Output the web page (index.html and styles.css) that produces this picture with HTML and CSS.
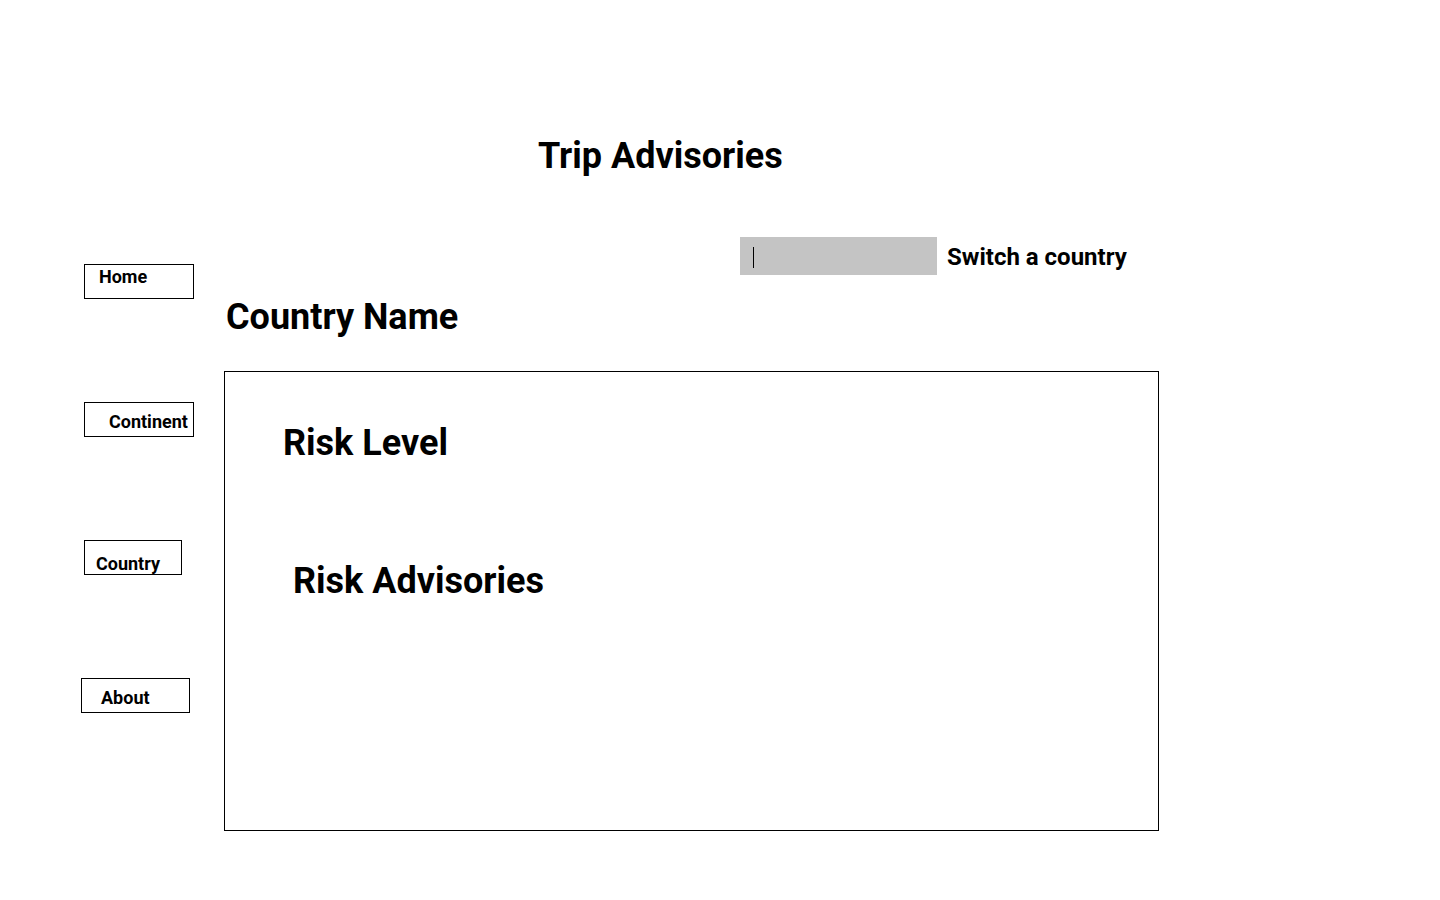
FILE: index.html
```html
<!DOCTYPE html>
<html lang="en">
<head>
<meta charset="utf-8">
<title>Trip Advisories</title>
<link rel="stylesheet" href="styles.css">
</head>
<body>
  <header class="top">
    <h1 class="title">Trip Advisories</h1>
  </header>
  <div class="layout">
    <nav class="side">
      <a class="nav-btn nav-home" href="#">Home</a>
      <a class="nav-btn nav-continent" href="#">Continent</a>
      <a class="nav-btn nav-country" href="#">Country</a>
      <a class="nav-btn nav-about" href="#">About</a>
    </nav>
    <main class="content">
      <div class="switch">
        <div class="search"><span class="caret"></span></div>
        <span class="switch-label">Switch a country</span>
      </div>
      <h2 class="country-name">Country Name</h2>
      <section class="panel">
        <h3 class="risk-level">Risk Level</h3>
        <h3 class="risk-adv">Risk Advisories</h3>
      </section>
    </main>
  </div>
</body>
</html>
```
FILE: styles.css
```css
* { box-sizing: border-box; }

html, body {
  margin: 0;
  padding: 0;
  background: #ffffff;
  color: #000000;
  font-family: Roboto, "Liberation Sans", Arial, sans-serif;
}

.top {
  padding: 135px 0 0 538px;
}

.title {
  margin: 0;
  font-size: 36px;
  line-height: 42px;
  font-weight: 700;
}

.layout {
  display: flex;
  margin-top: 60px;
}

.side {
  width: 224px;
  flex: none;
  display: flex;
  flex-direction: column;
  align-items: flex-start;
  padding-top: 27px;
}

.nav-btn {
  display: block;
  height: 35px;
  border: 1px solid #000;
  color: #000;
  text-decoration: none;
  font-size: 18px;
  line-height: 21px;
  font-weight: 700;
  margin-left: 84px;
  margin-top: 103px;
  white-space: nowrap;
}

.nav-home {
  margin-top: 0;
  width: 110px;
  padding: 1px 0 0 14px;
}

.nav-continent {
  width: 110px;
  padding: 8px 0 0 24px;
}

.nav-country {
  width: 98px;
  padding: 12px 0 0 11px;
}

.nav-about {
  margin-left: 81px;
  width: 109px;
  padding: 8px 0 0 19px;
}

.content {
  width: 935px;
  flex: none;
}

.switch {
  display: flex;
  align-items: flex-start;
  margin-left: 516px;
  height: 38px;
}

.search {
  width: 197px;
  height: 38px;
  background: #c4c4c4;
  padding: 10px 0 0 13px;
}

.caret {
  display: block;
  width: 1px;
  height: 21px;
  background: #000;
}

.switch-label {
  margin-left: 10px;
  margin-top: 6px;
  font-size: 24px;
  line-height: 28px;
  font-weight: 700;
  white-space: nowrap;
}

.country-name {
  margin: 21px 0 0 2px;
  font-size: 36px;
  line-height: 42px;
  font-weight: 700;
}

.panel {
  margin-top: 33px;
  height: 460px;
  border: 1px solid #000;
  padding: 50px 0 0 58px;
}

.risk-level,
.risk-adv {
  margin: 0;
  font-size: 36px;
  line-height: 42px;
  font-weight: 700;
}

.risk-adv {
  margin: 96px 0 0 10px;
}
```
